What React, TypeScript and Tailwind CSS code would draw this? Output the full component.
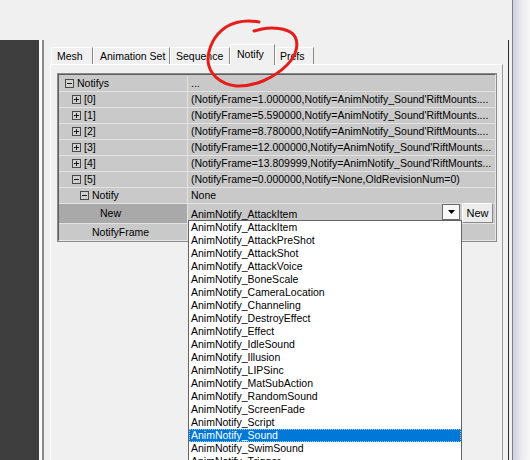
import React from "react";

function Expander({ minus }: { minus?: boolean }) {
  return (
    <svg width="9" height="9" viewBox="0 0 9 9" className="shrink-0">
      <rect x="0.5" y="0.5" width="8" height="8" fill="#d0d0d0" stroke="#4a4a4a" />
      <path d="M2 4.5h5" stroke="#1a1a1a" />
      {!minus && <path d="M4.5 2v5" stroke="#1a1a1a" />}
    </svg>
  );
}

type Row = { pl: string; box?: "plus" | "minus"; name: string; value: string };

const rows: Row[] = [
  { pl: "pl-[6px]", box: "minus", name: "Notifys", value: "..." },
  { pl: "pl-[13px]", box: "plus", name: "[0]", value: "(NotifyFrame=1.000000,Notify=AnimNotify_Sound'RiftMounts...." },
  { pl: "pl-[13px]", box: "plus", name: "[1]", value: "(NotifyFrame=5.590000,Notify=AnimNotify_Sound'RiftMounts...." },
  { pl: "pl-[13px]", box: "plus", name: "[2]", value: "(NotifyFrame=8.780000,Notify=AnimNotify_Sound'RiftMounts...." },
  { pl: "pl-[13px]", box: "plus", name: "[3]", value: "(NotifyFrame=12.000000,Notify=AnimNotify_Sound'RiftMounts..." },
  { pl: "pl-[13px]", box: "plus", name: "[4]", value: "(NotifyFrame=13.809999,Notify=AnimNotify_Sound'RiftMounts..." },
  { pl: "pl-[13px]", box: "minus", name: "[5]", value: "(NotifyFrame=0.000000,Notify=None,OldRevisionNum=0)" },
  { pl: "pl-[21px]", box: "minus", name: "Notify", value: "None" },
];

const items = [
  "AnimNotify_AttackItem",
  "AnimNotify_AttackPreShot",
  "AnimNotify_AttackShot",
  "AnimNotify_AttackVoice",
  "AnimNotify_BoneScale",
  "AnimNotify_CameraLocation",
  "AnimNotify_Channeling",
  "AnimNotify_DestroyEffect",
  "AnimNotify_Effect",
  "AnimNotify_IdleSound",
  "AnimNotify_Illusion",
  "AnimNotify_LIPSinc",
  "AnimNotify_MatSubAction",
  "AnimNotify_RandomSound",
  "AnimNotify_ScreenFade",
  "AnimNotify_Script",
  "AnimNotify_Sound",
  "AnimNotify_SwimSound",
  "AnimNotify_Trigger",
];

function Tab({ label, w, pl, selected }: { label: string; w: string; pl: string; selected?: boolean }) {
  return (
    <div
      className={
        `${w} ${pl} flex items-center whitespace-nowrap border-t border-l border-white border-r border-r-[#8a8a8a] bg-[#f0f0f0] rounded-tl-[2px] ` +
        (selected ? "h-[21px] -mb-[1px] relative z-10 pb-[1px]" : "h-[17px]")
      }
    >
      {label}
    </div>
  );
}

export default function App() {
  return (
    <div className="relative w-[530px] h-[460px] overflow-hidden bg-[#f0f0f0] flex font-['Liberation_Sans',Arial,sans-serif] text-[10.5px] leading-none text-black">
      {/* left dark pane */}
      <div className="w-[39px] flex flex-col">
        <div className="h-[40px]" />
        <div className="flex-1 bg-[#3e3e3e]" />
      </div>
      {/* splitter */}
      <div className="w-[5px] flex flex-col">
        <div className="h-[40px]" />
        <div className="flex-1 flex">
          <div className="w-[3px] bg-[#fbfbfb]" />
          <div className="w-[2px] bg-[#8a8a8a]" />
        </div>
      </div>
      {/* main */}
      <div className="w-[464px] flex flex-col pt-[44px] pl-[6px] pr-[5px]">
        <div className="h-[20px] flex items-end pl-[1px]">
          <Tab label="Mesh" w="w-[42px]" pl="pl-[5px]" />
          <Tab label="Animation Set" w="w-[77px]" pl="pl-[6px]" />
          <Tab label="Sequence" w="w-[60px]" pl="pl-[5px]" />
          <Tab label="Notify" w="w-[45px]" pl="pl-[6px]" selected />
          <Tab label="Prefs" w="w-[39px]" pl="pl-[4px]" />
        </div>
        <div className="flex-1 border-t border-l border-white border-r border-r-[#9a9a9a] pt-[8px] pl-[6px]">
          <div className="w-[440px] border border-[#8a8a8a]">
            <div className="border border-t-[#5e5e5e] border-l-[#5e5e5e] border-r-[#e6e6e6] border-b-[#e6e6e6] bg-[#c9c9c9] pt-[1px]">
              {rows.map((r) => (
                <div key={r.name} className="flex h-[16px] border-b border-[#e2e2e2]">
                  <div className={`w-[129px] shrink-0 border-r border-[#e2e2e2] flex items-center gap-[3px] ${r.pl}`}>
                    {r.box && <Expander minus={r.box === "minus"} />}
                    <span>{r.name}</span>
                  </div>
                  <div className="flex-1 flex items-center pl-[3px] whitespace-nowrap overflow-hidden">{r.value}</div>
                </div>
              ))}
              <div className="flex h-[20px] border-b border-[#e2e2e2]">
                <div className="w-[129px] shrink-0 border-r border-[#e2e2e2] bg-[#a9a9a9] flex items-center pl-[41px]">New</div>
                <div className="flex-1 flex items-start pl-[3px] pr-[2px]">
                  <div className="flex-1 h-full flex items-center pt-[1px]">AnimNotify_AttackItem</div>
                  <div className="w-[18px] h-[16px] border border-[#6a6a6a] bg-[#f7f7f7] flex items-center justify-center">
                    <svg width="7" height="4" viewBox="0 0 7 4">
                      <path d="M0 0h7L3.5 4z" fill="#000" />
                    </svg>
                  </div>
                  <div className="ml-[2px] -mt-[1px] w-[31px] h-[20px] border border-t-white border-l-white border-r-[#8a8a8a] border-b-[#8a8a8a] bg-[#ececec] flex items-center justify-center text-[11px]">
                    New
                  </div>
                </div>
              </div>
              <div className="flex h-[16px]">
                <div className="w-[129px] shrink-0 border-r border-[#e2e2e2] flex items-center pl-[33px]">NotifyFrame</div>
                <div className="flex-1" />
              </div>
            </div>
          </div>
        </div>
      </div>
      {/* right frame */}
      <div className="w-[1px] flex flex-col">
        <div className="h-[40px]" />
        <div className="flex-1 bg-[#2e2e2e]" />
      </div>
      <div className="w-[3px]" />
      <div className="w-[1px] bg-[#7e7e98]" />
      <div className="w-[17px] bg-gradient-to-r from-[#cfd0da] via-[#eaeaf0] to-[#f8f8f8]" />

      {/* dropdown list */}
      <div className="absolute left-[188px] top-[220px] w-[274px] h-[260px] bg-white border border-[#646464] pt-0">
        {items.map((it) => (
          <div
            key={it}
            className={
              "h-[13px] flex items-center pl-[2px] whitespace-nowrap " +
              (it === "AnimNotify_Sound"
                ? "bg-[#0078d7] text-white outline-1 outline-dotted outline-[#9cc6ee] -outline-offset-1"
                : "")
            }
          >
            {it}
          </div>
        ))}
      </div>

      {/* red hand-drawn circle */}
      <svg className="absolute left-0 top-0 pointer-events-none" width="530" height="460" viewBox="0 0 530 460">
        <path
          d="M259 22 C248 20 236 21 226 27 C214 35 208 48 208 61 C209 74 220 84 236 86 C254 87 274 78 287 65 C297 55 300 42 293 34 C286 28 272 27 262 29 L254 31"
          fill="none"
          stroke="#e41e1a"
          strokeWidth="3"
          strokeLinecap="round"
          strokeLinejoin="round"
        />
      </svg>
    </div>
  );
}
